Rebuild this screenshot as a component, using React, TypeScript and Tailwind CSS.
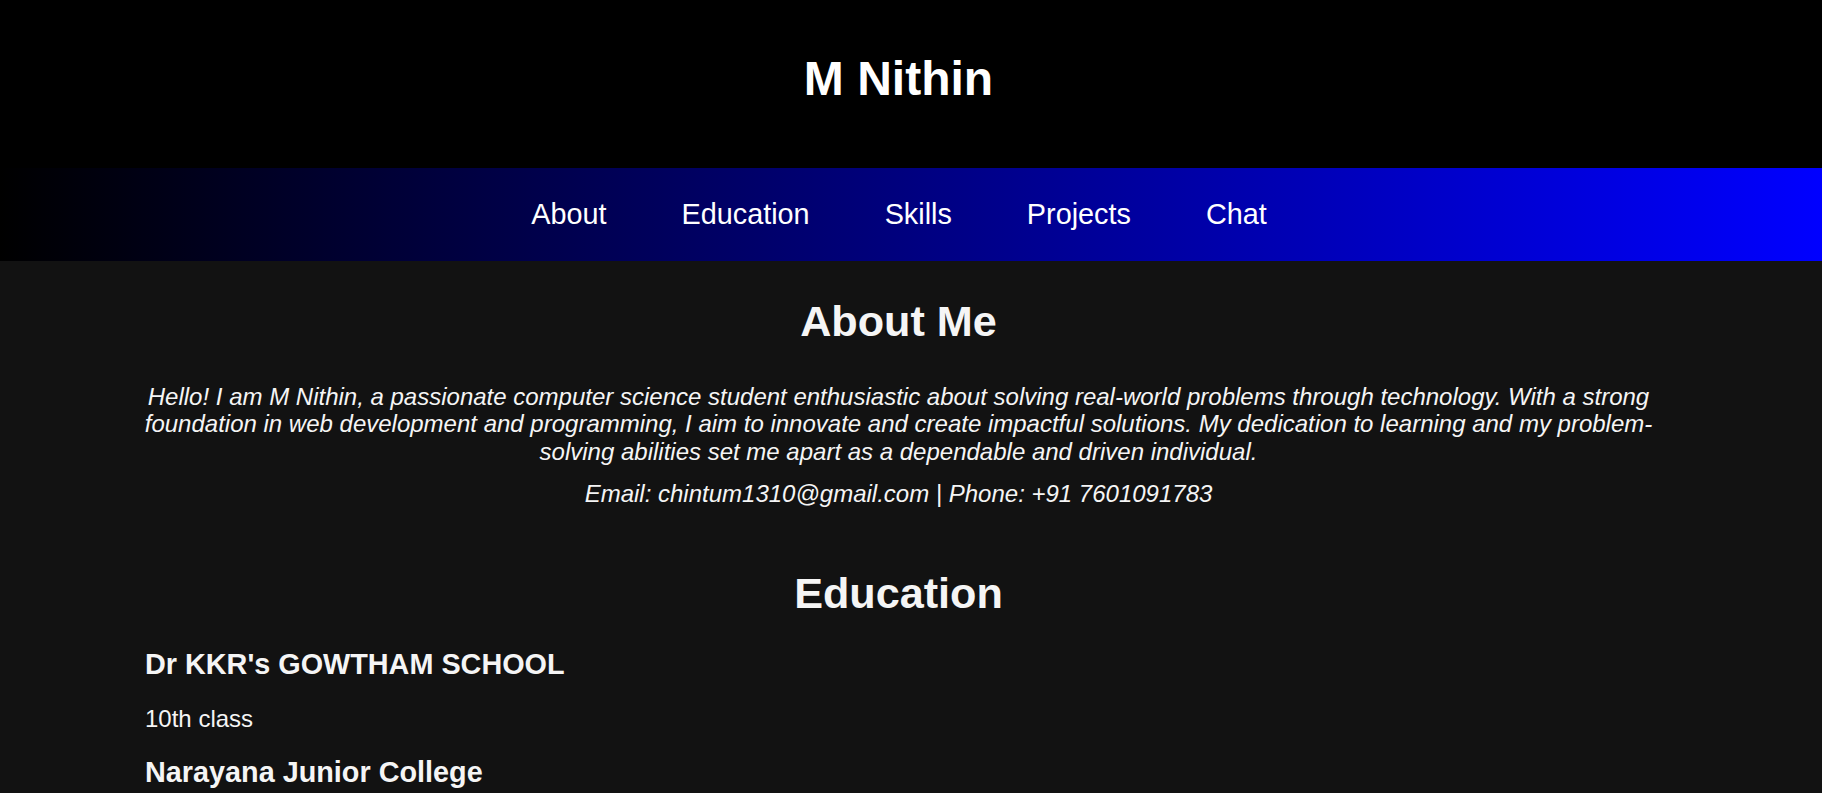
const navLinks = ['About', 'Education', 'Skills', 'Projects', 'Chat'];

export default function App() {
  return (
    <div className="min-h-screen bg-[#121212] font-['Liberation_Sans',Arial,sans-serif] text-[#f5f5f5]">
      {/* header */}
      <header className="h-[168px] bg-black pt-[51px] pr-[25px]">
        <h1 className="text-center text-[48px] leading-[1.15] font-bold text-white">M Nithin</h1>
      </header>

      {/* nav */}
      <nav className="flex h-[93px] items-center justify-center gap-[75px] bg-[linear-gradient(to_right,#000,#00f)] pr-[24px]">
        {navLinks.map((l) => (
          <a key={l} href={`#${l.toLowerCase()}`} className="text-[28.8px] leading-[1.15] text-white">
            {l}
          </a>
        ))}
      </nav>

      <main className="pl-[142px] pr-[167px]">
        <section id="about" className="pt-[36px] text-center">
          <h2 className="text-[43.2px] leading-[1.15] font-bold">About Me</h2>
          <p className="mt-[36px] text-[24px] leading-[1.15] italic">
            Hello! I am M Nithin, a passionate computer science student enthusiastic about solving real-world problems
            through technology. With a strong foundation in web development and programming, I aim to innovate and create
            impactful solutions. My dedication to learning and my problem-solving abilities set me apart as a dependable
            and driven individual.
          </p>
          <p className="mt-[15px] text-[24px] leading-[1.15] italic">
            Email: chintum1310@gmail.com | Phone: +91 7601091783
          </p>
        </section>

        <section id="education" className="pt-[61px]">
          <h2 className="text-center text-[43.2px] leading-[1.15] font-bold">Education</h2>
          <div className="pl-[3px]">
            <h3 className="mt-[29px] text-[28.8px] leading-[1.15] font-bold">Dr KKR's GOWTHAM SCHOOL</h3>
            <p className="mt-[24px] text-[24px] leading-[1.15]">10th class</p>
            <h3 className="mt-[24px] text-[28.8px] leading-[1.15] font-bold">Narayana Junior College</h3>
          </div>
        </section>
      </main>
    </div>
  );
}
